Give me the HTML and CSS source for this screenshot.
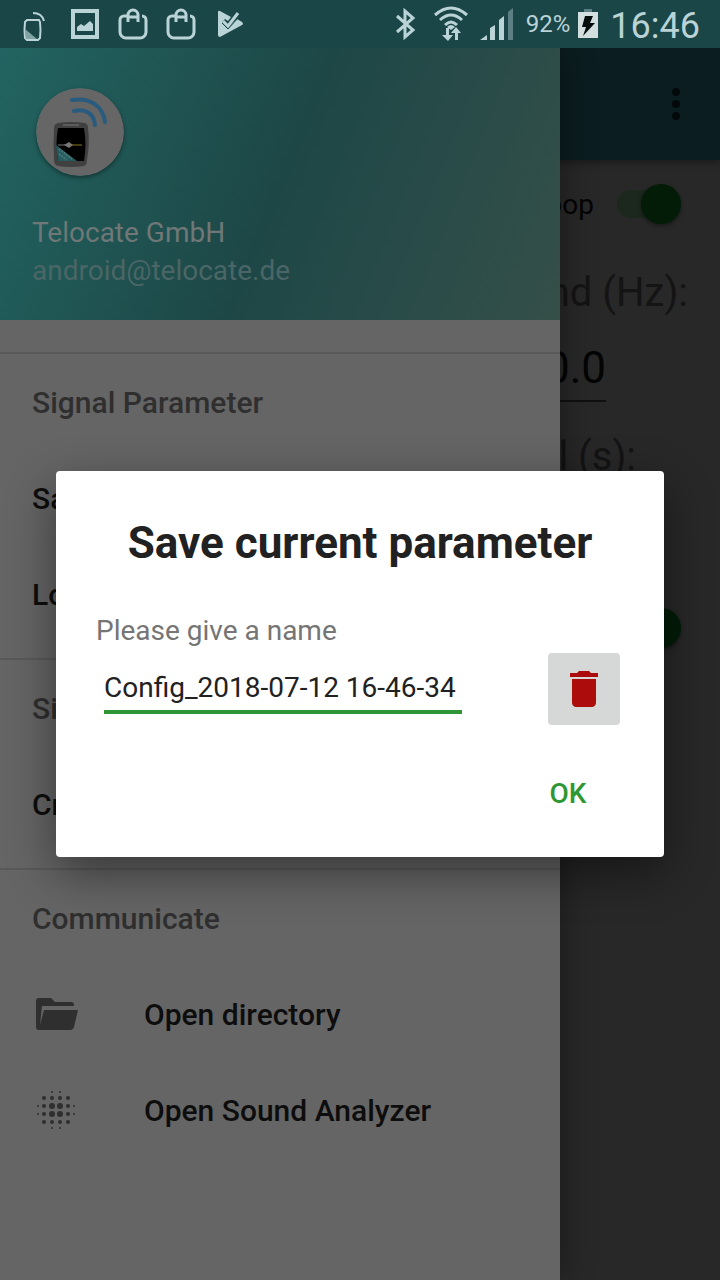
FILE: index.html
```
<!DOCTYPE html>
<html lang="en">
<head>
  <meta charset="UTF-8">
  <meta name="viewport" content="width=device-width, initial-scale=1.0">
  <title>Save current parameter</title>
  <link rel="stylesheet" href="styles.css">
</head>
<body>
  <header class="status-bar">
    <div class="notifications">
      <svg class="status-icon" viewBox="0 0 48 48">
        <path d="M27 20h12l1 2q1 8 0 16l-2 2H27l-2-2q-1-8 0-16z" fill="none" stroke="#b9d3d6" stroke-width="2"/>
        <path d="M25 29l12 10H26z" fill="#7fa3a3"/>
        <path d="M33 13q9 0 11 8" fill="none" stroke="#b9d3d6" stroke-width="2"/>
      </svg>
      <svg class="status-icon" viewBox="0 0 48 48">
        <path fill="#b9d3d6" fill-rule="evenodd" d="M11 9h28v30H11zM15 13v22h20V13z"/>
        <path fill="#b9d3d6" d="M17 31v-4l4-3 3 2 6-5 3 3v7z"/>
      </svg>
      <svg class="status-icon" viewBox="0 0 48 48">
        <path d="M20 16h-4a4 4 0 0 0-4 4v12a6 6 0 0 0 6 6h14a6 6 0 0 0 6-6V20a4 4 0 0 0-4-4M20 22v-7a5 5 0 0 1 10 0v7M20 17h10" fill="none" stroke="#b9d3d6" stroke-width="3"/>
      </svg>
      <svg class="status-icon" viewBox="0 0 48 48">
        <path d="M20 16h-4a4 4 0 0 0-4 4v12a6 6 0 0 0 6 6h14a6 6 0 0 0 6-6V20a4 4 0 0 0-4-4M20 22v-7a5 5 0 0 1 10 0v7M20 17h10" fill="none" stroke="#b9d3d6" stroke-width="3"/>
      </svg>
      <svg class="status-icon" viewBox="0 0 48 48">
        <path fill="#b9d3d6" d="M14 12q0-2 2-1l11 6-3 4-3-2-3 3 6 6 9-9 5 3q2 2 0 3L16 37q-2 0-2-2z"/>
        <path d="M19 21l5 5 10-13" fill="none" stroke="#b9d3d6" stroke-width="3"/>
        <path d="M18 23l6 6 10-11" fill="none" stroke="#1b4648" stroke-width="1"/>
      </svg>
    </div>
    <div class="system">
      <svg class="bluetooth" viewBox="0 0 24 32">
        <path d="M3 8l16 14-8 7V3l8 7L3 24" fill="none" stroke="#b9d3d6" stroke-width="3"/>
      </svg>
      <svg class="wifi" viewBox="0 0 34 36">
        <g fill="none" stroke="#b9d3d6" stroke-width="3">
          <path d="M1 9q16-14 32 0M6 14q11-10 22 0M11 19q6-6 12 0"/>
        </g>
        <path fill="#b9d3d6" d="M13 21q4-4 8 0l-4 3zM12 22h3v7h4l-5 6-6-6h4zM21 34v-7h-4l5-6 5 6h-3v7z"/>
      </svg>
      <svg class="signal" viewBox="0 0 34 34">
        <path fill="#b9d3d6" d="M0 33l7-5v5zM10 33V21l5-3v15zM19 33V13l5-4v24z"/>
        <path fill="#5b7f82" d="M28 33V5l5-4v32z"/>
      </svg>
      <span class="percent">92%</span>
      <svg class="battery" viewBox="0 0 20 30">
        <path fill="#5b7f82" d="M6 0h8v4H6z"/>
        <path fill="#d3dedf" d="M0 3h20v26H0z"/>
        <path fill="#050c0c" d="M7 7h8l-3 7h5L5 27l3-9H4z"/>
      </svg>
      <span class="clock">16:46</span>
    </div>
  </header>

  <div class="screen">
    <main class="app">
      <div class="toolbar">
        <button class="menu-btn" aria-label="More options">
          <svg viewBox="0 0 8 32"><circle cx="4" cy="4" r="4"/><circle cx="4" cy="16" r="4"/><circle cx="4" cy="28" r="4"/></svg>
        </button>
      </div>
      <div class="row row-switch">
        <label for="loop">Loop</label>
        <input class="switch" type="checkbox" id="loop" checked>
      </div>
      <label class="row row-label" for="soundEnd">End (Hz):</label>
      <div class="row row-value">
        <input class="value" type="text" id="soundEnd" value="20000.0">
      </div>
      <div class="row row-label row-interval">Interval (s):</div>
      <div class="row row-switch row-second">
        <input class="switch" type="checkbox" aria-label="Fade" checked>
      </div>
    </main>

    <nav class="drawer">
      <div class="drawer-header">
        <svg class="avatar" viewBox="0 0 88 88">
          <circle cx="44" cy="44" r="44" fill="#666"/>
          <g fill="none" stroke="#285b7e" stroke-width="4" stroke-linecap="round">
            <path d="M36 12c18-3 31 6 33 22M38 23c12-3 20 3 21 14"/>
          </g>
          <path d="M22 35q13-2 27 0 3 1 3 5 2 16-1 32 0 5-3 6-13 2-26 0-4-1-4-6-1-16 0-32 0-4 4-5z" fill="#404040"/>
          <path d="M27 37h16" stroke="#5c5c5c" stroke-width="2"/>
          <path d="M22 40h26q3 16 0 33H22q-3-17 0-33z" fill="#000"/>
          <path d="M20 57l21 16H22z" fill="#245b5e"/>
          <path d="M23 61l13 10M23 66l8 6" stroke="#4b7779" stroke-width="2" stroke-dasharray="2 1"/>
          <path d="M22 57h14" stroke="#777" stroke-width="1"/>
          <path d="M28 57l5-3 4 3-4 3z" fill="#777"/>
          <path d="M36 57h10" stroke="#8b7721" stroke-width="1"/>
        </svg>
        <div class="account">
          <div class="account-name">Telocate GmbH</div>
          <div class="account-mail">android@telocate.de</div>
        </div>
      </div>

      <section class="group">
        <h2>Signal Parameter</h2>
        <a href="#">Save</a>
        <a href="#">Load</a>
      </section>
      <section class="group">
        <h2>Signal</h2>
        <a href="#">Create</a>
      </section>
      <section class="group">
        <h2>Communicate</h2>
        <a href="#">
          <svg class="item-icon" viewBox="0 0 48 48">
            <path fill="#2f2f2f" d="M7 40q-3 0-3-3V11q0-3 3-3h12l4 4h16q3 0 3 3v1H10L8 35l4-15h34l-4 17q-1 3-4 3z"/>
          </svg>
          Open directory
        </a>
        <a href="#">
          <svg class="item-icon" viewBox="0 0 48 48" fill="#2f2f2f">
            <circle cx="20" cy="20" r="3"/><circle cx="28" cy="20" r="3"/><circle cx="20" cy="28" r="3"/><circle cx="28" cy="28" r="3"/>
            <circle cx="12" cy="12" r="2"/><circle cx="20" cy="12" r="2"/><circle cx="28" cy="12" r="2"/><circle cx="36" cy="12" r="2"/>
            <circle cx="12" cy="20" r="2"/><circle cx="36" cy="20" r="2"/><circle cx="12" cy="28" r="2"/><circle cx="36" cy="28" r="2"/>
            <circle cx="12" cy="36" r="2"/><circle cx="20" cy="36" r="2"/><circle cx="28" cy="36" r="2"/><circle cx="36" cy="36" r="2"/>
            <circle cx="20" cy="6" r="1"/><circle cx="28" cy="6" r="1"/><circle cx="20" cy="42" r="1"/><circle cx="28" cy="42" r="1"/>
            <circle cx="6" cy="20" r="1"/><circle cx="6" cy="28" r="1"/><circle cx="42" cy="20" r="1"/><circle cx="42" cy="28" r="1"/>
          </svg>
          Open Sound Analyzer
        </a>
      </section>
    </nav>

    <div class="overlay">
      <form class="dialog" role="dialog" aria-labelledby="dialogTitle">
        <h1 id="dialogTitle">Save current parameter</h1>
        <label for="configName">Please give a name</label>
        <div class="name-row">
          <input class="name-input" type="text" id="configName" value="Config_2018-07-12 16-46-34">
          <button class="delete-btn" type="button" aria-label="Delete">
            <svg viewBox="0 0 48 48"><path fill="#ad0c0c" d="M12 38c0 2 2 4 4 4h16c2 0 4-2 4-4V14H12zM38 8h-7l-2-2H19l-2 2h-7v4h28z"/></svg>
          </button>
        </div>
        <div class="actions">
          <button class="ok-btn" type="button">OK</button>
        </div>
      </form>
    </div>
  </div>
</body>
</html>
```
FILE: styles.css
```
* {
  box-sizing: border-box;
}
body {
  margin: 0;
  height: 100vh;
  display: flex;
  flex-direction: column;
  overflow: hidden;
  background: #282828;
  font-family: Roboto, sans-serif;
  font-size: 28px;
}
h1, h2 {
  margin: 0;
}
button, input {
  font: inherit;
  border: none;
  margin: 0;
  padding: 0;
}
svg {
  display: block;
  flex-shrink: 0;
}

/* status bar */
.status-bar {
  display: flex;
  justify-content: space-between;
  height: 48px;
  padding: 0 20px 0 12px;
  background: #1b4648;
  color: #b9d3d6;
}
.notifications, .system {
  display: flex;
  align-items: center;
}
.notifications .status-icon {
  width: 48px;
  height: 48px;
}
.status-icon:first-child {
  margin-left: -12px;
  margin-right: 12px;
}
.bluetooth {
  width: 24px;
  height: 32px;
  margin-right: 16px;
}
.wifi {
  width: 34px;
  height: 36px;
  margin-right: 12px;
}
.signal {
  width: 34px;
  height: 34px;
  margin-right: 12px;
}
.percent {
  font-size: 24px;
  margin-right: 8px;
}
.battery {
  width: 20px;
  height: 30px;
  margin-right: 12px;
}
.clock {
  font-size: 36px;
  line-height: 48px;
  padding-top: 4px;
}

/* app behind the drawer */
.screen {
  position: relative;
  flex: 1;
  overflow: hidden;
}
.toolbar {
  display: flex;
  align-items: center;
  justify-content: flex-end;
  height: 112px;
  padding-right: 40px;
  background: #0b1d20;
  box-shadow: 0 2px 8px rgba(0, 0, 0, 0.4);
}
.menu-btn {
  background: none;
}
.menu-btn svg {
  width: 8px;
  height: 32px;
  fill: #030809;
}
.row {
  display: flex;
  align-items: center;
  justify-content: flex-end;
}
.row-switch {
  height: 88px;
  padding-right: 39px;
  gap: 23px;
  color: #040404;
}
.switch {
  appearance: none;
  display: flex;
  align-items: center;
  justify-content: flex-end;
  width: 64px;
  height: 28px;
  border-radius: 14px;
  background: #1c271d;
}
.switch::before {
  content: "";
  width: 40px;
  height: 40px;
  border-radius: 50%;
  background: #031c07;
  box-shadow: 0 2px 4px rgba(0, 0, 0, 0.4);
  flex-shrink: 0;
}
.row-label {
  height: 88px;
  padding-right: 32px;
  font-size: 40px;
  color: #141414;
}
.row-value {
  align-items: flex-start;
  height: 76px;
  padding-right: 114px;
}
.value {
  width: 240px;
  height: 66px;
  font-size: 44px;
  text-align: right;
  background: none;
  color: #040404;
  border-bottom: 2px solid #101010;
}
.row-interval {
  padding-right: 84px;
}
.row-second {
  margin-top: 84px;
}

/* navigation drawer */
.drawer {
  position: absolute;
  top: 0;
  left: 0;
  bottom: 0;
  width: 100%;
  max-width: 560px;
  background: #656565;
  box-shadow: 0 0 32px rgba(0, 0, 0, 0.4);
}
.drawer-header {
  display: flex;
  flex-direction: column;
  justify-content: space-between;
  height: 272px;
  margin-bottom: 32px;
  padding: 40px 32px 30px;
  background: linear-gradient(112deg, #226461, #1d4746 50%, #284b49 72%, #354f48);
}
.avatar {
  width: 88px;
  height: 88px;
  margin-left: 4px;
  border-radius: 50%;
  box-shadow: 0 2px 4px rgba(0, 0, 0, 0.4);
}
.account {
  line-height: 38px;
}
.account-name {
  color: #6f7777;
}
.account-mail {
  color: #4b6666;
}
.group {
  padding-bottom: 16px;
  border-top: 2px solid #595959;
}
.group h2, .group a {
  display: flex;
  align-items: center;
  height: 96px;
  padding: 0 32px;
  font-size: 30px;
  font-weight: 500;
}
.group h2 {
  color: #2f2f2f;
}
.group a {
  color: #0d0d0d;
  text-decoration: none;
}
.item-icon {
  width: 48px;
  height: 48px;
  margin-right: 64px;
}

/* dialog */
.overlay {
  position: absolute;
  inset: 0;
  display: flex;
  align-items: center;
  justify-content: center;
  padding: 0 56px;
}
.dialog {
  width: 100%;
  padding: 44px 44px 28px 40px;
  background: #fff;
  border-radius: 4px;
  box-shadow: 0 16px 48px rgba(0, 0, 0, 0.45);
}
.dialog h1 {
  padding-left: 4px;
  margin-bottom: 42px;
  font-size: 44px;
  line-height: 56px;
  font-weight: 700;
  text-align: center;
  color: #212121;
}
.dialog label {
  display: block;
  line-height: 36px;
  margin-bottom: 4px;
  color: #757575;
}
.name-row {
  display: flex;
  align-items: center;
  justify-content: space-between;
  margin-bottom: 32px;
  padding-left: 8px;
}
.name-input {
  width: 358px;
  height: 50px;
  border-bottom: 4px solid #2e9733;
  outline: none;
  color: #212121;
}
.delete-btn {
  display: flex;
  align-items: center;
  justify-content: center;
  width: 72px;
  height: 72px;
  background: #d6d7d7;
  border-radius: 4px;
}
.delete-btn svg {
  width: 48px;
  height: 48px;
}
.actions {
  display: flex;
  justify-content: flex-end;
}
.ok-btn {
  width: 104px;
  height: 72px;
  background: none;
  font-weight: 500;
  color: #2e9733;
}
```
